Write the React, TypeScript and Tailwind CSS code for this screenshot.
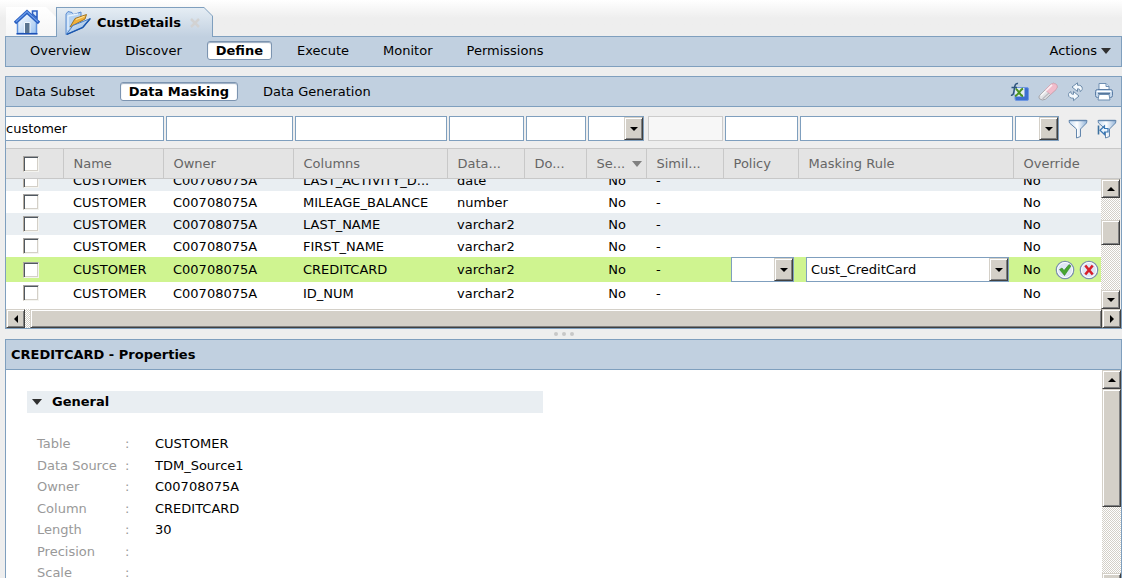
import React, { useState } from "react";

const bevel =
  "border border-t-[#d4d0c8] border-l-[#d4d0c8] border-r-[#404040] border-b-[#404040] bg-[#d4d0c8] shadow-[inset_1px_1px_0_#fff,inset_-1px_-1px_0_#808080]";
const track =
  "bg-[repeating-conic-gradient(#ffffff_0_25%,#d4d0c8_0_50%)] bg-[length:2px_2px]";
const colored = "border border-[#7f9fbe]";

type Direction = "up" | "down" | "left" | "right";

const arrows: Record<Direction, string> = {
  up: "M0 6h8L4 2z",
  down: "M0 2h8L4 6z",
  left: "M6 0v8L2 4z",
  right: "M2 0v8l4-4z",
};

const Arrow: React.FC<{ direction: Direction }> = ({ direction }) => (
  <svg viewBox="0 0 8 8" className="h-2 w-2" fill="#000">
    <path d={arrows[direction]} />
  </svg>
);

const ScrollButton: React.FC<{ direction: Direction }> = ({ direction }) => (
  <button
    aria-label={`Scroll ${direction}`}
    className={`flex h-[19px] w-[19px] shrink-0 items-center justify-center ${bevel}`}
  >
    <Arrow direction={direction} />
  </button>
);

interface SelectBoxProps {
  label: string;
  value?: string;
  className: string;
}

const SelectBox: React.FC<SelectBoxProps> = ({ label, value = "", className }) => (
  <div className={`relative h-[25px] ${className}`}>
    <select
      aria-label={label}
      defaultValue={value}
      className={`h-full w-full appearance-none bg-white pl-1 pr-5 ${colored}`}
    >
      <option value={value}>{value}</option>
    </select>
    <span
      className={`pointer-events-none absolute inset-y-px right-px flex w-[19px] items-center justify-center ${bevel}`}
    >
      <Arrow direction="down" />
    </span>
  </div>
);

const Checkbox: React.FC<{ label: string }> = ({ label }) => (
  <input
    type="checkbox"
    aria-label={label}
    className="block h-4 w-4 appearance-none border border-t-[#a0a0a0] border-l-[#b5aca0] border-r-[#f4f4f0] border-b-[#f4f4f0] bg-white shadow-[inset_1px_1px_0_#505860,inset_-1px_-1px_0_#d4d0c8] checked:bg-gray-400"
  />
);

const HomeIcon = () => (
  <svg viewBox="0 0 26 26" className="h-[26px] w-[26px]">
    <defs>
      <linearGradient id="wall" x1="0" y1="0" x2="1" y2="1">
        <stop offset="0" stopColor="#fff" />
        <stop offset="1" stopColor="#9cc3f0" />
      </linearGradient>
    </defs>
    <path d="M18.5 2h4.5v7l-4.5-4z" fill="#dceaf9" stroke="#2b5fc4" strokeWidth="1.6" />
    <path d="M3.5 13L13 4.5l9.5 8.5v11.5h-19z" fill="url(#wall)" stroke="#5f92dd" strokeWidth="1.5" />
    <path d="M10.5 13.5h5.500v11h-5.500z" fill="#59738f" stroke="#eef6ff" strokeWidth="1" />
    <path d="M1 14L13 2.800 25 14" fill="none" stroke="#2b5fc0" strokeWidth="3.400" />
    <path d="M2 12.800L13 2.600l11 10.200" fill="none" stroke="#6a9ceb" strokeWidth="1.200" />
    <path d="M2.500 24.800h21" stroke="#1c50b5" strokeWidth="1.600" />
  </svg>
);

const FolderIcon = () => (
  <svg viewBox="0 0 26 26" className="h-[26px] w-[26px]">
    <defs>
      <linearGradient id="folderFront" x1="0" y1="0" x2="1" y2="1">
        <stop offset="0" stopColor="#f2f8fd" />
        <stop offset="1" stopColor="#79a8dc" />
      </linearGradient>
    </defs>
    <path d="M1 24.500V4l2-2.500 4 1 1.500 2L16 2v16z" fill="#b4d2f2" stroke="#5b8bcf" />
    <path d="M3 20V6l10-2" fill="none" stroke="#e8f3fd" strokeWidth="1.300" />
    <path d="M5 17L10 8.500 21.500 4.500 20 9z" fill="#f2b13a" stroke="#9f7627" />
    <path d="M11 9.500l8.500-3.200" stroke="#ffe19a" strokeWidth="1.200" />
    <path d="M1.300 24.500L8 15.500 25.500 8.500 18 17.500z" fill="url(#folderFront)" stroke="#4a80c8" />
    <path d="M2 24.300l15.800-7 7.300-8.600" fill="none" stroke="#1b56ad" strokeWidth="1.400" />
  </svg>
);

const FunctionIcon = () => (
  <svg viewBox="0 0 20 20" className="h-5 w-5">
    <rect x="5" y="5.500" width="13.500" height="13" rx="1.500" fill="#3d6fd0" stroke="#6f98e2" />
    <path d="M5 6h9.500v8.500H5z" fill="#e4edf0" />
    <path d="M5.500 7c3 0 4 7 7.500 7M13 6.500c-3 1-4.500 7-8 7.500" fill="none" stroke="#4b9222" strokeWidth="2" />
    <path d="M8 1.500C5.500.8 4.800 3.500 4.300 7s-1 7-3.300 6M1.500 5.500h5.500" fill="none" stroke="#2d547e" strokeWidth="1.500" />
  </svg>
);

const EraserIcon = () => (
  <svg viewBox="0 0 20 20" className="h-5 w-5">
    <path d="M1.500 13.500L12.500 2.500Q15.500 0 18.500 2.500 20.300 5 18 7.500L7.500 17.200Q4 19 1.500 16.800.3 15 1.500 13.500z" fill="#e3e4e7" stroke="#a3a4aa" />
    <path d="M7 8l5.500-5.500q3-2.500 6 0 1.800 2.500-.5 5L12.500 12.500z" fill="#f1bccb" stroke="#d5a0b0" strokeWidth=".7" />
    <path d="M3 13.500L14 2.800" fill="none" stroke="#fff" strokeOpacity=".75" strokeWidth="1.700" />
    <path d="M4.500 17L11 11" stroke="#b9babf" strokeWidth="1.200" />
  </svg>
);

const RefreshIcon = () => (
  <svg viewBox="0 0 20 20" className="h-5 w-5" fill="#f4f9fd" stroke="#6d8cab" strokeLinejoin="round">
    <path d="M6 5L11.500.8v2.400c3-.2 4.800 1 4.800 3.300 0 1.500-.8 2.500-2.300 3 .3-1.800-.5-2.800-2.500-2.700v2.700z" />
    <path d="M13 14l-5.500 4.700v-2.500c-3 .2-5-1-5-3.500 0-1.500.9-2.500 2.500-3-.3 1.800.5 2.700 2.500 2.600V9.500z" />
  </svg>
);

const PrinterIcon = () => (
  <svg viewBox="0 0 20 20" className="h-5 w-5">
    <path d="M5 9V1.500h7l3 3V9z" fill="#fbfdff" stroke="#6f8fb2" />
    <path d="M12 1.500v3h3" fill="#d9e7f4" stroke="#6f8fb2" />
    <rect x="1.500" y="7.500" width="17" height="8" rx="2" fill="#c6d8eb" stroke="#5c7ea6" />
    <path d="M3 9.500h14" stroke="#fff" />
    <path d="M4 11.500h12" stroke="#56779b" strokeWidth="1.600" />
    <path d="M5 12.500h10l1 5.500H4z" fill="#fff" stroke="#6f8fb2" />
  </svg>
);

const FilterIcon: React.FC<{ reset?: boolean }> = ({ reset }) => (
  <svg viewBox="0 0 20 20" className="h-5 w-5">
    <defs>
      <linearGradient id="funnel" x1="0" y1="0" x2="1" y2="0">
        <stop offset="0" stopColor="#c3daf2" />
        <stop offset=".45" stopColor="#fff" />
        <stop offset="1" stopColor="#8fb2d8" />
      </linearGradient>
    </defs>
    <path d="M1 1.500h18l-.5 2.500-6 6v7.500l-4 1.500v-9L1.500 4z" fill="url(#funnel)" stroke="#6487ad" strokeLinejoin="round" />
    <path d="M1.500 1.500h17" stroke="#6487ad" strokeWidth="1.400" />
    {reset && (
      <>
        <path d="M1.500 6.500v9" stroke="#3d719f" strokeWidth="1.600" />
        <path d="M3 11.200L7.500 7v2.500H11v3.500H7.500v2.500z" fill="#eaf5ff" stroke="#3b78b4" strokeWidth="1.200" />
      </>
    )}
  </svg>
);

const AcceptIcon = () => (
  <svg viewBox="0 0 20 20" className="h-5 w-5">
    <circle cx="10" cy="10" r="8.700" fill="#dfe6f5" stroke="#7d90ae" strokeWidth="1.300" />
    <circle cx="10" cy="10" r="7.500" fill="none" stroke="#fff" />
    <path d="M4.500 9.500L7 8l2 2.500 5-6 2 1.500-6.500 9.500z" fill="#48a630" stroke="#2e8420" strokeWidth=".6" />
  </svg>
);

const CancelIcon = () => (
  <svg viewBox="0 0 20 20" className="h-5 w-5">
    <circle cx="10" cy="10" r="8.700" fill="#dfe6f5" stroke="#7d90ae" strokeWidth="1.300" />
    <circle cx="10" cy="10" r="7.500" fill="none" stroke="#fff" />
    <path d="M6.300 5.500l7.400 9M13.700 5.500l-7.400 9" stroke="#d71f28" strokeWidth="2.600" />
  </svg>
);

const Triangle: React.FC<{ className: string }> = ({ className }) => (
  <svg viewBox="0 0 10 6" className={`h-[6px] w-[10px] ${className}`} fill="currentColor">
    <path d="M0 0h10L5 6z" />
  </svg>
);

interface NavProps {
  items: string[];
  initial: string;
  className?: string;
}

const Nav: React.FC<NavProps> = ({ items, initial, className = "" }) => {
  const [active, setActive] = useState(initial);
  return (
    <nav className={`flex items-center gap-4 ${className}`}>
      {items.map((item) => (
        <button
          key={item}
          onClick={() => setActive(item)}
          className={`h-[19px] rounded-[3px] border px-2 leading-[17px] ${
            item === active
              ? "border-[#7c94b0] bg-white font-bold shadow-[inset_0_1px_1px_#9aabc0]"
              : "border-transparent"
          }`}
        >
          {item}
        </button>
      ))}
    </nav>
  );
};

const headers = [
  "Name",
  "Owner",
  "Columns",
  "Data...",
  "Do...",
  "Se...",
  "Simil...",
  "Policy",
  "Masking Rule",
  "Override",
];

const rows = [
  { column: "LAST_ACTIVITY_D...", type: "date" },
  { column: "MILEAGE_BALANCE", type: "number" },
  { column: "LAST_NAME", type: "varchar2" },
  { column: "FIRST_NAME", type: "varchar2" },
  { column: "CREDITCARD", type: "varchar2", editing: true },
  { column: "ID_NUM", type: "varchar2" },
];

const properties = [
  ["Table", "CUSTOMER"],
  ["Data Source", "TDM_Source1"],
  ["Owner", "C00708075A"],
  ["Column", "CREDITCARD"],
  ["Length", "30"],
  ["Precision", ""],
  ["Scale", ""],
];

const Columns: React.FC<{ last: string }> = ({ last }) => (
  <colgroup>
    <col className="w-[57px]" />
    <col className="w-[100px]" />
    <col className="w-[130px]" />
    <col className="w-[154px]" />
    <col className="w-[77px]" />
    <col className="w-[62px]" />
    <col className="w-[60px]" />
    <col className="w-[77px]" />
    <col className="w-[75px]" />
    <col />
    <col className={last} />
  </colgroup>
);

const TextFilter: React.FC<{ label: string; value?: string; className?: string }> = ({
  label,
  value,
  className = "",
}) => (
  <input
    type="text"
    aria-label={`Filter ${label}`}
    defaultValue={value}
    className={`h-[25px] w-full min-w-0 bg-white ${colored} ${className}`}
  />
);

const FilterRow = () => (
  <div className="grid h-[41px] grid-cols-[158px_127px_152px_75px_60px_58px_75px_73px_minmax(0,1fr)_106px] items-end gap-x-[2px] bg-[#eeeeee] pb-[7px]">
    <TextFilter label="Name" value="customer" className="border-l-0" />
    <TextFilter label="Owner" />
    <TextFilter label="Columns" />
    <TextFilter label="Data Type" />
    <TextFilter label="Domain" />
    <SelectBox label="Filter Sensitive" className="w-14" />
    <input
      type="text"
      aria-label="Filter Similar"
      disabled
      className="h-[25px] w-full border border-[#cccccc] bg-[#f7f7f7]"
    />
    <TextFilter label="Policy" />
    <TextFilter label="Masking Rule" />
    <div className="flex items-center">
      <SelectBox label="Filter Override" className="w-11" />
      <button aria-label="Apply filter" className="ml-[9px]">
        <FilterIcon />
      </button>
      <button aria-label="Reset filter" className="ml-[9px]">
        <FilterIcon reset />
      </button>
    </div>
  </div>
);

const DataTable = () => (
  <>
    <table className="w-full table-fixed border-collapse text-[#666666]">
      <Columns last="w-[108px]" />
      <thead>
        <tr className="h-[30px] border-y border-[#c8c8c8] bg-[#e4e4e4] text-left">
          <th className="border-r border-[#c8c8c8] pl-[17px]">
            <Checkbox label="Select all" />
          </th>
          {headers.map((header) => (
            <th
              key={header}
              className="border-r border-[#c8c8c8] pl-[10px] font-normal whitespace-nowrap last:border-r-0"
            >
              {header === "Se..." ? (
                <span className="flex items-center justify-between pr-1">
                  {header}
                  <Triangle className="text-[#808080]" />
                </span>
              ) : (
                header
              )}
            </th>
          ))}
        </tr>
      </thead>
    </table>
    <div className="flex h-[130px]">
      <div className="min-w-0 flex-1 overflow-hidden bg-white">
        <table className="-mt-[10px] w-full table-fixed">
          <Columns last="w-[88px]" />
          <tbody>
            {rows.map((row) => (
              <tr
                key={row.column}
                className={
                  row.editing
                    ? "h-[25px] bg-[#cff490]"
                    : "h-[22px] odd:bg-[#e9eef2] last:bg-white"
                }
              >
                <td className="pl-[17px]">
                  <Checkbox label={`Select ${row.column}`} />
                </td>
                <td className="pl-[10px]">CUSTOMER</td>
                <td className="pl-[10px]">C00708075A</td>
                <td className="pl-[10px] whitespace-nowrap">{row.column}</td>
                <td className="pl-[10px]">{row.type}</td>
                <td />
                <td className="pr-5 text-right">No</td>
                <td className="pl-[10px]">-</td>
                <td className="pl-2">
                  {row.editing && <SelectBox label="Policy" className="w-[63px]" />}
                </td>
                <td className="pr-1 pl-2">
                  {row.editing && (
                    <SelectBox label="Masking Rule" value="Cust_CreditCard" className="w-full" />
                  )}
                </td>
                <td className="pl-[10px]">
                  <div className="flex items-center">
                    No
                    {row.editing && (
                      <>
                        <button aria-label="Accept" className="ml-[14px]">
                          <AcceptIcon />
                        </button>
                        <button aria-label="Cancel" className="ml-1">
                          <CancelIcon />
                        </button>
                      </>
                    )}
                  </div>
                </td>
              </tr>
            ))}
          </tbody>
        </table>
      </div>
      <div className={`mr-px flex w-[19px] flex-col ${track}`}>
        <ScrollButton direction="up" />
        <div className={`mt-[22px] h-[25px] ${bevel}`} />
        <div className="flex-1" />
        <ScrollButton direction="down" />
      </div>
    </div>
    <div className={`flex h-[19px] ${track}`}>
      <ScrollButton direction="left" />
      <div className={`ml-[5px] flex-1 ${bevel}`} />
      <ScrollButton direction="right" />
    </div>
  </>
);

const Properties = () => (
  <section className={`flex-1 bg-white ${colored}`}>
    <h2 className="h-[30px] border-b border-[#7f9fbe] bg-[#c1d0e0] pl-[5px] leading-[29px] font-bold">
      CREDITCARD - Properties
    </h2>
    <div className="flex">
      <div className="flex-1 px-[21px] pt-[21px] pb-2">
        <h3 className="w-[516px] max-w-full bg-[#e9eef2] leading-[22px] font-bold">
          <button className="flex w-full items-center gap-[10px] pl-[5px] text-left">
            <Triangle className="text-[#303030]" />
            General
          </button>
        </h3>
        <dl className="mt-5 pl-[10px]">
          {properties.map(([name, value]) => (
            <div key={name} className="flex leading-[22px] even:leading-[21px]">
              <dt className="flex w-[118px] text-[#999999]">
                <span className="w-[88px]">{name}</span>:
              </dt>
              <dd>{value || "\u00a0"}</dd>
            </div>
          ))}
        </dl>
      </div>
      <div className={`flex w-[19px] flex-col ${track}`}>
        <ScrollButton direction="up" />
        <div className={`h-[118px] ${bevel}`} />
        <div className="flex-1" />
        <ScrollButton direction="down" />
      </div>
    </div>
  </section>
);

const App: React.FC = () => {
  return (
    <div className="flex h-screen flex-col overflow-hidden bg-[#eeeeee] pl-[5px] font-['DejaVu_Sans',sans-serif] text-[13px] leading-[17px] text-black">
      <header className="z-10 -ml-[5px] flex h-9 shrink-0 items-end bg-linear-to-b from-white to-[#eeeeee] to-50% pl-[6px]">
        <button
          aria-label="Home"
          className="flex h-[29px] w-[50px] items-center bg-linear-to-b from-white to-[#f6f6f6] pl-2 [clip-path:polygon(0_0,40px_0,100%_10px,100%_100%,0_100%)]"
        >
          <HomeIcon />
        </button>
        <div className="-mb-px h-[30px] w-[157px] bg-[#7f9fbe] px-px pt-px [clip-path:polygon(0_0,148px_0,100%_9px,100%_100%,0_100%)]">
          <div className="flex h-full items-center bg-linear-to-b from-[#e5edf4] to-[#c1d0e0] pl-2 [clip-path:polygon(0_0,147px_0,100%_8px,100%_100%,0_100%)]">
            <FolderIcon />
            <span className="ml-[6px] font-bold">CustDetails</span>
            <button aria-label="Close tab" className="ml-[9px]">
              <svg viewBox="0 0 10 10" className="h-[10px] w-[10px]" stroke="#d2d2d2" strokeWidth="2.500">
                <path d="M1 1l8 8M9 1L1 9" />
              </svg>
            </button>
          </div>
        </div>
      </header>

      <div className={`flex h-[31px] shrink-0 items-center justify-between bg-[#c1d0e0] pb-[2px] ${colored}`}>
        <Nav
          items={["Overview", "Discover", "Define", "Execute", "Monitor", "Permissions"]}
          initial="Define"
          className="pl-[15px]"
        />
        <button className="flex items-center gap-1 pr-[10px]">
          Actions
          <Triangle className="text-[#303030]" />
        </button>
      </div>

      <main className={`mt-[9px] shrink-0 ${colored}`}>
        <div className="flex h-[30px] items-center justify-between border-b border-[#7f9fbe] bg-[#c1d0e0]">
          <Nav
            items={["Data Subset", "Data Masking", "Data Generation"]}
            initial="Data Masking"
          />
          <div className="flex gap-2 pr-[7px]">
            <button aria-label="Functions">
              <FunctionIcon />
            </button>
            <button aria-label="Clear">
              <EraserIcon />
            </button>
            <button aria-label="Refresh">
              <RefreshIcon />
            </button>
            <button aria-label="Print">
              <PrinterIcon />
            </button>
          </div>
        </div>
        <FilterRow />
        <DataTable />
      </main>

      <div className="flex h-[10px] shrink-0 items-center justify-center gap-1">
        <span className="h-1 w-1 rounded-full bg-[#c8c8c8]" />
        <span className="h-1 w-1 rounded-full bg-[#c8c8c8]" />
        <span className="h-1 w-1 rounded-full bg-[#c8c8c8]" />
      </div>

      <Properties />
    </div>
  );
};

export default App;
